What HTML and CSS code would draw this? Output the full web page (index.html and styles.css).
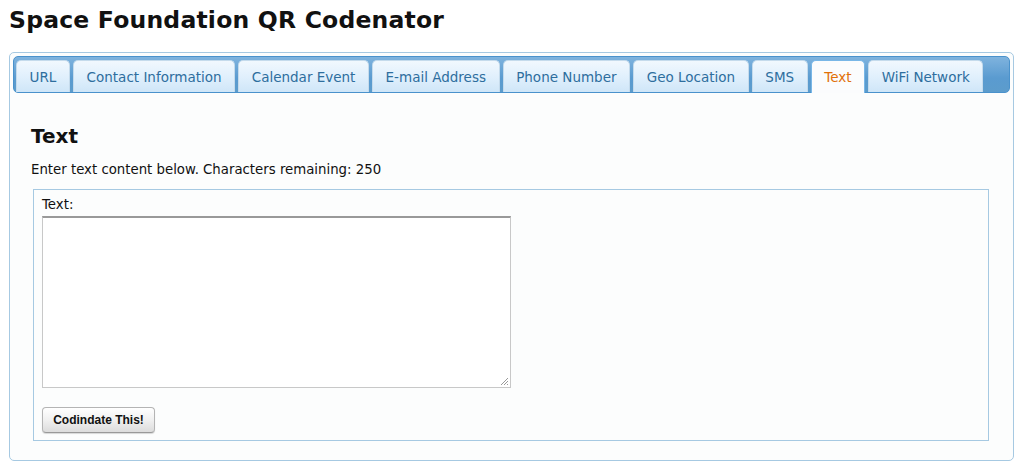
FILE: index.html
```html
<!DOCTYPE html>
<html>
<head>
<meta charset="utf-8">
<link rel="stylesheet" href="styles.css">
</head>
<body>
<h1 class="title">Space Foundation QR Codenator</h1>
<div class="tabs">
  <ul class="tab-nav">
    <li class="tab">URL</li>
    <li class="tab">Contact Information</li>
    <li class="tab">Calendar Event</li>
    <li class="tab">E-mail Address</li>
    <li class="tab">Phone Number</li>
    <li class="tab">Geo Location</li>
    <li class="tab">SMS</li>
    <li class="tab active">Text</li>
    <li class="tab">WiFi Network</li>
  </ul>
  <div class="panel">
    <h2 class="panel-title">Text</h2>
    <p class="hint">Enter text content below. Characters remaining: 250</p>
    <div class="fieldset">
      <label class="label">Text:</label>
      <div class="textarea"><svg class="grip" width="10" height="10" viewBox="0 0 10 10"><path d="M9 2L2 9M9 5L5 9M9 8L8 9" stroke="#999" stroke-width="1"/></svg></div>
      <button class="btn">Codindate This!</button>
    </div>
  </div>
</div>
</body>
</html>
```

FILE: styles.css
```css
html, body { margin: 0; padding: 0; background: #fff; }
body { padding: 0 7px 0 9px; font-family: "DejaVu Sans", Verdana, sans-serif; color: #111; }
.title {
  margin: 0;
  padding-top: 6px;
  height: 46px;
  font-size: 23.5px;
  font-weight: bold;
  letter-spacing: 0.2px;
  color: #111;
  line-height: 28px;
}
.tabs {
  border: 1px solid #a6c9e2;
  border-radius: 5px;
  background: #fcfdfd;
  padding: 3px;
  height: 401px;
}
.tab-nav {
  list-style: none;
  margin: 0;
  padding: 3px 0 0 2px;
  height: 32px;
  display: flex;
  gap: 3px;
  align-items: flex-end;
  border: 1px solid #4a92cc;
  border-radius: 5px;
  background: linear-gradient(#7fb3de, #5a9bd0 60%, #5c9ccc);
}
.tab {
  height: 32px;
  box-sizing: border-box;
  padding: 0 12.6px;
  border: 1px solid #c5dbec;
  border-bottom: none;
  border-radius: 5px 5px 0 0;
  background: linear-gradient(#f1f8fe, #dfeffc 55%, #cfe6f8);
  color: #2e6e9e;
  font-size: 13.5px;
  line-height: 32px;
  margin-bottom: 0;
}
.tab.active {
  height: 33px;
  margin-bottom: -1px;
  background: #fbfcfd;
  border-color: #79b7e7;
  color: #e17009;
  line-height: 32px;
}
.panel { padding: 0 21px 0 18px; }
.panel-title {
  margin: 30px 0 0 0;
  font-size: 20px;
  font-weight: bold;
  line-height: 26px;
  color: #111;
}
.hint {
  margin: 12px 0 0 0;
  font-size: 13.3px;
  line-height: 18px;
  color: #111;
}
.fieldset {
  margin: 10px 0 0 2px;
  border: 1px solid #a6c9e2;
  height: 250px;
  padding: 0 8px;
  display: flex;
  flex-direction: column;
  align-items: flex-start;
}
.label {
  font-size: 13.3px;
  line-height: 16px;
  margin-top: 7px;
  color: #111;
}
.textarea {
  margin-top: 3px;
  width: 469px;
  height: 172px;
  box-sizing: border-box;
  background: #fff;
  border: 1px solid #c8c8c8;
  border-top: 2px solid #999;
  position: relative;
}
.grip { position: absolute; right: 1px; bottom: 1px; }
.btn {
  margin-top: 19px;
  width: 113px;
  height: 26px;
  font-family: "Liberation Sans", Arial, sans-serif;
  font-weight: bold;
  font-size: 12px;
  color: #111;
  background: linear-gradient(#ffffff, #f0f0f0 50%, #dcdcdc);
  border: 1px solid #b4b4b4;
  border-bottom-color: #999;
  border-radius: 4px;
  padding: 0;
  box-shadow: 0 1px 1px rgba(0,0,0,0.15);
}
```
